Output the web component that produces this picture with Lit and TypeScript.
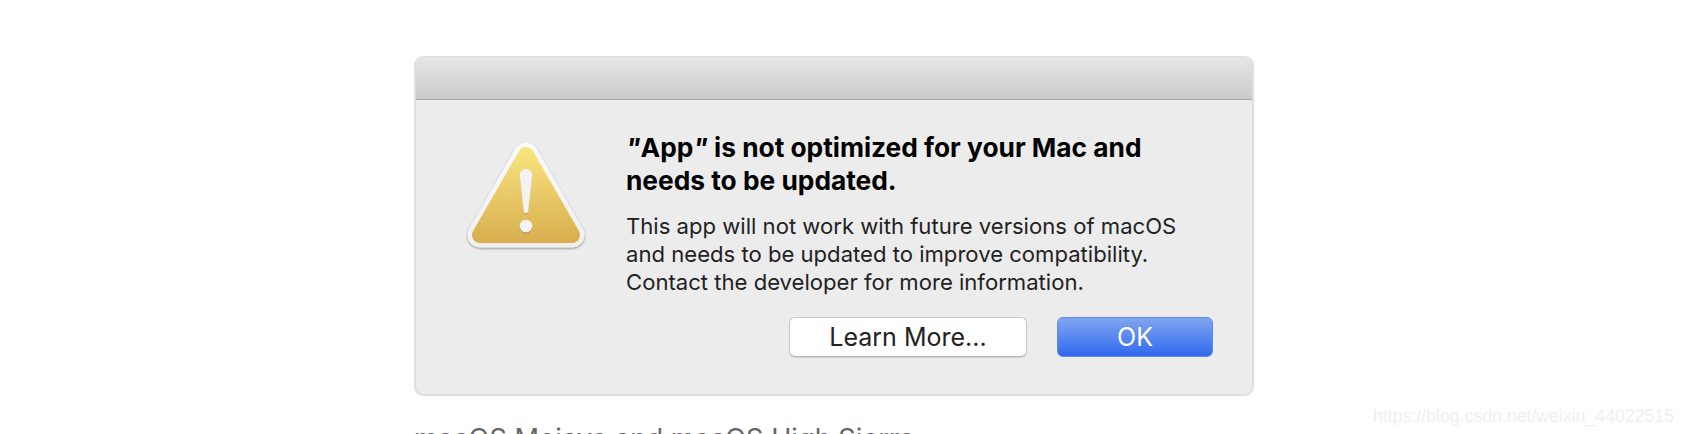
import { LitElement, html, css } from 'lit';
import { customElement } from 'lit/decorators.js';

@customElement('app-root')
export class AppRoot extends LitElement {
  static styles = css`
    :host {
      display: block;
      position: relative;
      height: 434px;
      overflow: hidden;
      background: #fff;
      font-family: Inter, 'Noto Sans', sans-serif;
    }

    .page {
      padding: 56px 0 0 414px;
    }

    .dialog {
      box-sizing: border-box;
      width: 840px;
      height: 340px;
      border: 2px solid #dedede;
      border-top-width: 1px;
      border-radius: 9px;
      background: #ececec;
      overflow: hidden;
    }

    .titlebar {
      height: 42px;
      background: linear-gradient(#e6e6e6, #cbcbcb);
      border-bottom: 1px solid #a8a8a8;
    }

    .content {
      display: flex;
      padding: 0 39px 0 44px;
    }

    .icon {
      flex: none;
      width: 130px;
      height: 120px;
      margin-top: 35px;
      margin-right: 36px;
    }

    .main {
      flex: 1;
      padding-top: 32px;
    }

    h1 {
      margin: 0;
      font-size: 26.3px;
      line-height: 32.5px;
      font-weight: 700;
      color: #000;
    }

    h1 i {
      font-style: italic;
    }

    p {
      margin: 15px 0 0;
      font-size: 22.1px;
      line-height: 28px;
      color: #222;
    }

    .actions {
      display: flex;
      justify-content: flex-end;
      gap: 30px;
      margin-top: 21px;
    }

    button {
      box-sizing: border-box;
      height: 40px;
      padding: 0;
      border-radius: 6px;
      font-family: inherit;
      font-size: 25px;
    }

    .secondary {
      width: 238px;
      border: 1px solid #c6c6c6;
      border-bottom-color: #b4b4b4;
      background: #fff;
      color: #222;
      box-shadow: 0 1px 1px rgba(0, 0, 0, 0.12);
    }

    .primary {
      width: 156px;
      border: 1px solid #5f8ce8;
      background: linear-gradient(#80a6f0, #3069ee);
      color: #fff;
    }

    .below {
      margin: 25px 0 0;
      font-size: 27.2px;
      line-height: 36px;
      color: #666;
      white-space: nowrap;
    }

    .watermark {
      position: absolute;
      right: 10px;
      bottom: 7px;
      font-family: 'Liberation Sans', sans-serif;
      font-size: 17.7px;
      color: #efefef;
    }
  `;

  private renderIcon() {
    return html`
      <svg class="icon" viewBox="460 135 130 120" aria-hidden="true">
        <defs>
          <linearGradient id="gold" gradientUnits="userSpaceOnUse" x1="0" y1="147" x2="0" y2="243">
            <stop offset="0" stop-color="#f9e680"></stop>
            <stop offset="1" stop-color="#d8ad4e"></stop>
          </linearGradient>
          <linearGradient id="rim" gradientUnits="userSpaceOnUse" x1="0" y1="142" x2="0" y2="248">
            <stop offset="0" stop-color="#fbfbfb"></stop>
            <stop offset="1" stop-color="#efefef"></stop>
          </linearGradient>
          <filter id="drop" x="-30%" y="-30%" width="160%" height="170%">
            <feDropShadow dx="0" dy="1" stdDeviation="0.8" flood-color="#000" flood-opacity="0.45"></feDropShadow>
          </filter>
          <filter id="mark" x="-40%" y="-10%" width="180%" height="120%">
            <feDropShadow dx="0" dy="1" stdDeviation="0.6" flood-color="#8a6a1c" flood-opacity="0.55"></feDropShadow>
          </filter>
        </defs>
        <polygon
          points="526,155 480,235 572,235"
          fill="url(#rim)"
          stroke="url(#rim)"
          stroke-width="25"
          stroke-linejoin="round"
          filter="url(#drop)"
        ></polygon>
        <polygon
          points="526,155 480,235 572,235"
          fill="url(#gold)"
          stroke="url(#gold)"
          stroke-width="16"
          stroke-linejoin="round"
        ></polygon>
        <g fill="#f3f3f3" filter="url(#mark)">
          <path d="M526 169c3.800 0 6.400 2.800 6.300 6.500L528.300 211c-.2 1.500-1 2.200-2.300 2.200s-2.100-.7-2.300-2.200L519.700 175.500c-.1-3.700 2.500-6.500 6.300-6.500z"></path>
          <circle cx="526" cy="226" r="6.300"></circle>
        </g>
      </svg>
    `;
  }

  render() {
    return html`
      <div class="page">
        <div class="dialog">
          <div class="titlebar"></div>
          <div class="content">
            ${this.renderIcon()}
            <div class="main">
              <h1><i>"</i>App<i>"</i> is not optimized for your Mac and<br />needs to be updated.</h1>
              <p>
                This app will not work with future versions of macOS<br />
                and needs to be updated to improve compatibility.<br />
                Contact the developer for more information.
              </p>
              <div class="actions">
                <button class="secondary">Learn More...</button>
                <button class="primary">OK</button>
              </div>
            </div>
          </div>
        </div>
        <div class="below">macOS Mojave and macOS High Sierra</div>
      </div>
      <div class="watermark">https://blog.csdn.net/weixin_44022515</div>
    `;
  }
}
